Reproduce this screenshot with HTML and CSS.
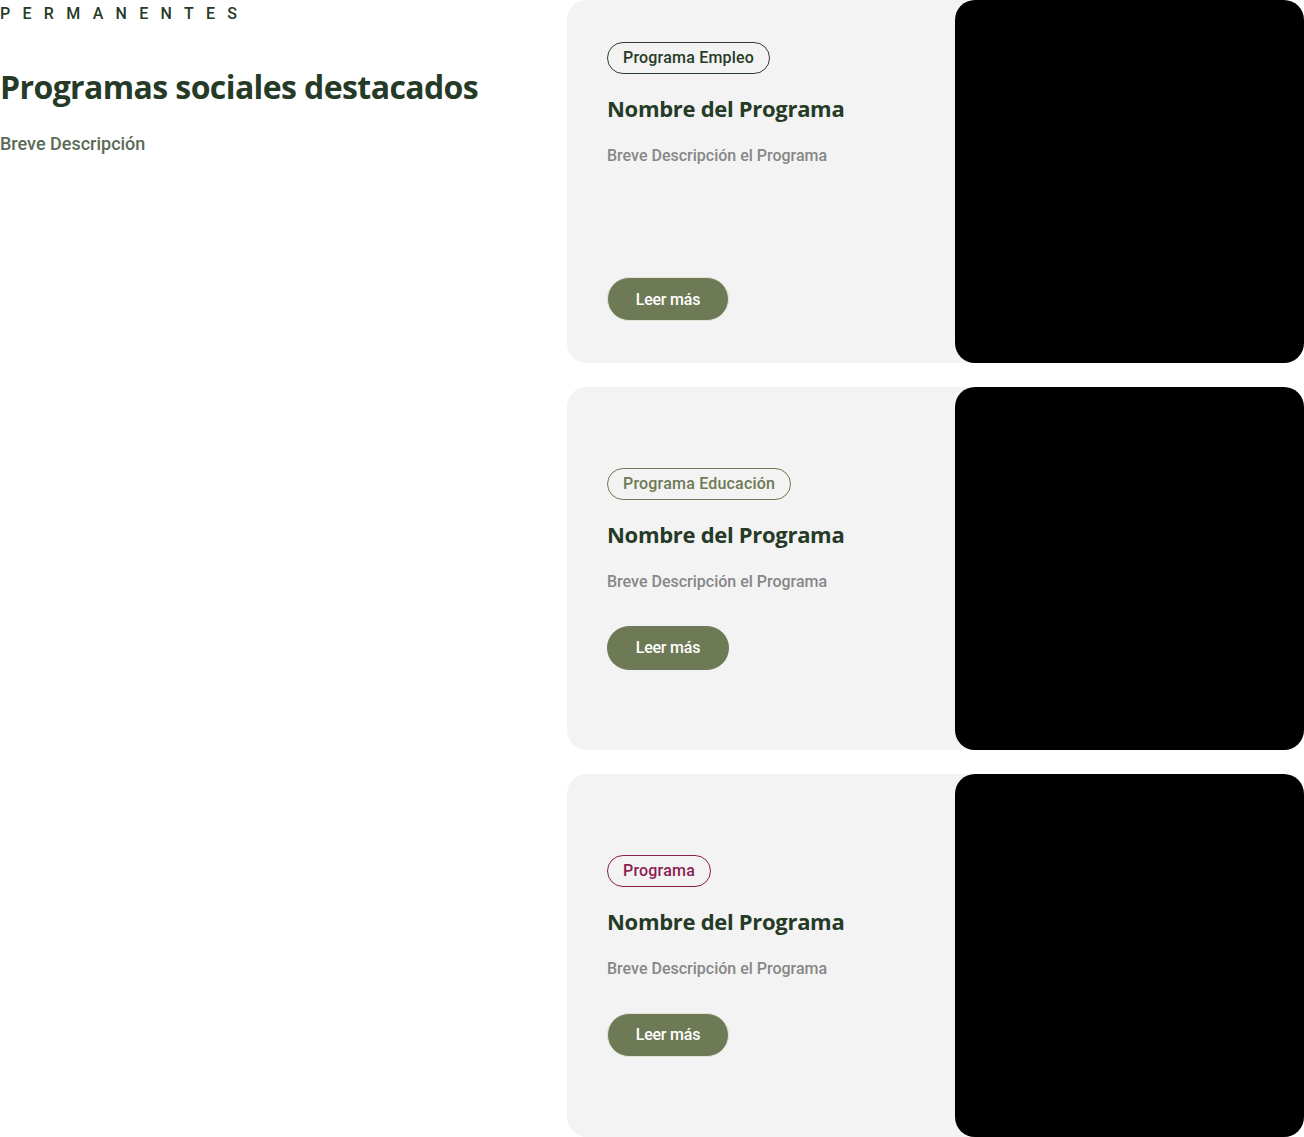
FILE: index.html
```html
<!DOCTYPE html>
<html lang="es">
<head>
<meta charset="utf-8">
<title>Programas sociales destacados</title>
<link rel="stylesheet" href="styles.css">
</head>
<body>
<main class="section">
  <div class="intro">
    <p class="eyebrow">PERMANENTES</p>
    <h1 class="heading">Programas sociales destacados</h1>
    <p class="lead">Breve Descripción</p>
  </div>
  <div class="cards">
    <article class="card card--spread">
      <div class="card-body">
        <div class="card-top">
          <span class="tag tag--dark">Programa Empleo</span>
          <h2 class="card-title">Nombre del Programa</h2>
          <p class="card-desc">Breve Descripción el Programa</p>
        </div>
        <a class="btn btn--outlined" href="#">Leer más</a>
      </div>
      <div class="card-media"></div>
    </article>
    <article class="card">
      <div class="card-body">
        <div class="card-top">
          <span class="tag tag--olive">Programa Educación</span>
          <h2 class="card-title">Nombre del Programa</h2>
          <p class="card-desc">Breve Descripción el Programa</p>
        </div>
        <a class="btn" href="#">Leer más</a>
      </div>
      <div class="card-media"></div>
    </article>
    <article class="card">
      <div class="card-body">
        <div class="card-top">
          <span class="tag tag--wine">Programa</span>
          <h2 class="card-title">Nombre del Programa</h2>
          <p class="card-desc">Breve Descripción el Programa</p>
        </div>
        <a class="btn btn--outlined" href="#">Leer más</a>
      </div>
      <div class="card-media"></div>
    </article>
  </div>
</main>
</body>
</html>
```
FILE: styles.css
```css
* { box-sizing: border-box; }
html, body { margin: 0; padding: 0; background: #fff; }
body {
  font-family: "Open Sans", "Noto Sans", sans-serif;
  color: #263b27;
}
.section {
  display: grid;
  grid-template-columns: 567px 737px;
}
.intro { padding-top: 4px; }
.eyebrow {
  margin: 0;
  font-family: Roboto, "Open Sans", sans-serif;
  font-size: 16px;
  line-height: 20px;
  letter-spacing: 12.3px;
  font-weight: 500;
  color: #263b27;
}
.heading {
  margin: 43px 0 0;
  font-size: 32px;
  line-height: 40px;
  font-weight: 700;
  color: #263b27;
  letter-spacing: -0.6px;
}
.lead {
  margin: 25px 0 0;
  font-family: Roboto, "Open Sans", sans-serif;
  font-size: 18px;
  line-height: 24px;
  font-weight: 500;
  color: #5b6b58;
  letter-spacing: 0;
}
.cards {
  display: flex;
  flex-direction: column;
  gap: 24px;
}
.card {
  display: flex;
  height: 363px;
  background: #f3f3f3;
  border-radius: 20px;
}
.card-body {
  flex: 1;
  display: flex;
  flex-direction: column;
  justify-content: center;
  align-items: flex-start;
  gap: 34px;
  padding: 42px 40px;
}
.card--spread .card-body { justify-content: space-between; }
.card-top {
  display: flex;
  flex-direction: column;
  align-items: flex-start;
}
.tag {
  display: inline-block;
  height: 32px;
  padding: 0 15px;
  border: 1px solid;
  border-radius: 16px;
  font-family: Roboto, "Open Sans", sans-serif;
  font-size: 16px;
  line-height: 30px;
  font-weight: 500;
  letter-spacing: 0.2px;
}
.tag--dark { color: #263b27; border-color: #2f3f2d; }
.tag--olive { color: #6e7a55; border-color: #6e7a55; }
.tag--wine { color: #8a1f50; border-color: #8a1f50; }
.card-title {
  margin: 19px 0 0;
  font-size: 22px;
  line-height: 30px;
  font-weight: 700;
  color: #263b27;
  letter-spacing: -0.3px;
}
.card-desc {
  margin: 23px 0 0;
  font-family: Roboto, "Open Sans", sans-serif;
  font-size: 16px;
  line-height: 20px;
  font-weight: 500;
  color: #878787;
  letter-spacing: 0;
}
.btn {
  display: inline-flex;
  align-items: center;
  justify-content: center;
  width: 122px;
  height: 44px;
  border-radius: 22px;
  background: #6e7956;
  color: #fff;
  font-family: Roboto, "Open Sans", sans-serif;
  font-size: 16px;
  font-weight: 500;
  letter-spacing: -0.2px;
  text-decoration: none;
}
.btn--outlined { border: 1px solid #e4e2d6; }
.card-media {
  width: 349px;
  flex: none;
  background: #000;
  border-radius: 20px;
}
```
